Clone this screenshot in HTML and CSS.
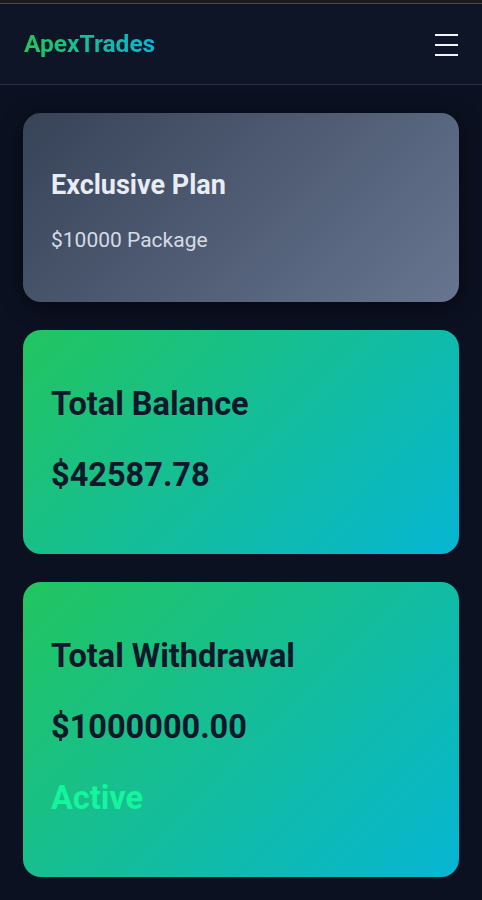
FILE: index.html
```html
<!DOCTYPE html>
<html lang="en">
<head>
  <meta charset="UTF-8">
  <meta name="viewport" content="width=device-width, initial-scale=1.0">
  <title>ApexTrades - Dashboard</title>
  <link rel="stylesheet" href="styles.css">
</head>
<body>
  <div class="topline"></div>
  <!-- Barre de navigation -->
  <header class="navbar">
    <a href="#" class="logo">ApexTrades</a>
    <button class="menu-btn" aria-label="Menu">
      <span></span><span></span><span></span>
    </button>
  </header>

  <main class="dashboard">
    <!-- Plan -->
    <div class="card card-plan">
      <h3 class="plan-title">Exclusive Plan</h3>
      <p class="plan-sub">$10000 Package</p>
    </div>

    <!-- Solde -->
    <div class="card card-stat">
      <h2 class="stat-title">Total Balance</h2>
      <p class="stat-value">$42587.78</p>
    </div>

    <!-- Retraits -->
    <div class="card card-stat">
      <h2 class="stat-title">Total Withdrawal</h2>
      <p class="stat-value">$1000000.00</p>
      <p class="stat-status">Active</p>
    </div>
  </main>
</body>
</html>
```

FILE: styles.css
```css
/* Theme sombre bleu nuit avec accents vert / cyan */
body {
  font-family: Roboto, "Liberation Sans", Arial, sans-serif;
  background-color: #0b1120;
  color: #e5e7eb;
  margin: 0;
  padding: 0;
}
.topline {
  height: 3px;
  background-color: #1c1c1f;
  border-bottom: 1px solid #4a4a52;
}
.navbar {
  display: flex;
  align-items: center;
  justify-content: space-between;
  height: 80px;
  padding: 0 24px;
  background-color: #0e1526;
  border-bottom: 1px solid #253045;
}
.logo {
  font-size: 24.5px;
  font-weight: bold;
  text-decoration: none;
  background: linear-gradient(90deg, #22c55e, #06b6d4);
  -webkit-background-clip: text;
  background-clip: text;
  color: transparent;
  margin-top: -2px;
}
.menu-btn {
  display: flex;
  flex-direction: column;
  gap: 8px;
  width: 23px;
  padding: 0;
  margin-top: 1px;
  background: none;
  border: 0;
  cursor: pointer;
}
.menu-btn span {
  display: block;
  height: 2px;
  background-color: #f1f5f9;
}
.dashboard {
  display: flex;
  flex-direction: column;
  gap: 28px;
  padding: 28px 23px;
}
.card {
  border-radius: 18px;
  padding: 0 28px;
}
.card h2, .card h3, .card p {
  margin: 0;
  line-height: 1.2;
}
.card-plan {
  background: linear-gradient(135deg, #374357, #677590);
  box-shadow: 0 4px 20px rgba(0, 0, 0, 0.5);
  padding-top: 56px;
  padding-bottom: 48px;
}
.plan-title {
  font-size: 27px;
  font-weight: bold;
  color: #e8edf5;
}
.plan-sub {
  margin-top: 27px !important;
  font-size: 21px;
  color: #d5dbe5;
}
.card-stat {
  background: linear-gradient(135deg, #22c55e, #06b6d4);
  color: #0f172a;
  padding-top: 55px;
  padding-bottom: 59px;
  display: flex;
  flex-direction: column;
  gap: 32px;
}
.stat-title {
  font-size: 32.5px;
  font-weight: bold;
}
.stat-value {
  font-size: 32.5px;
  font-weight: bold;
}
.stat-status {
  font-size: 32.5px;
  font-weight: bold;
  color: #14f59c;
}
```
